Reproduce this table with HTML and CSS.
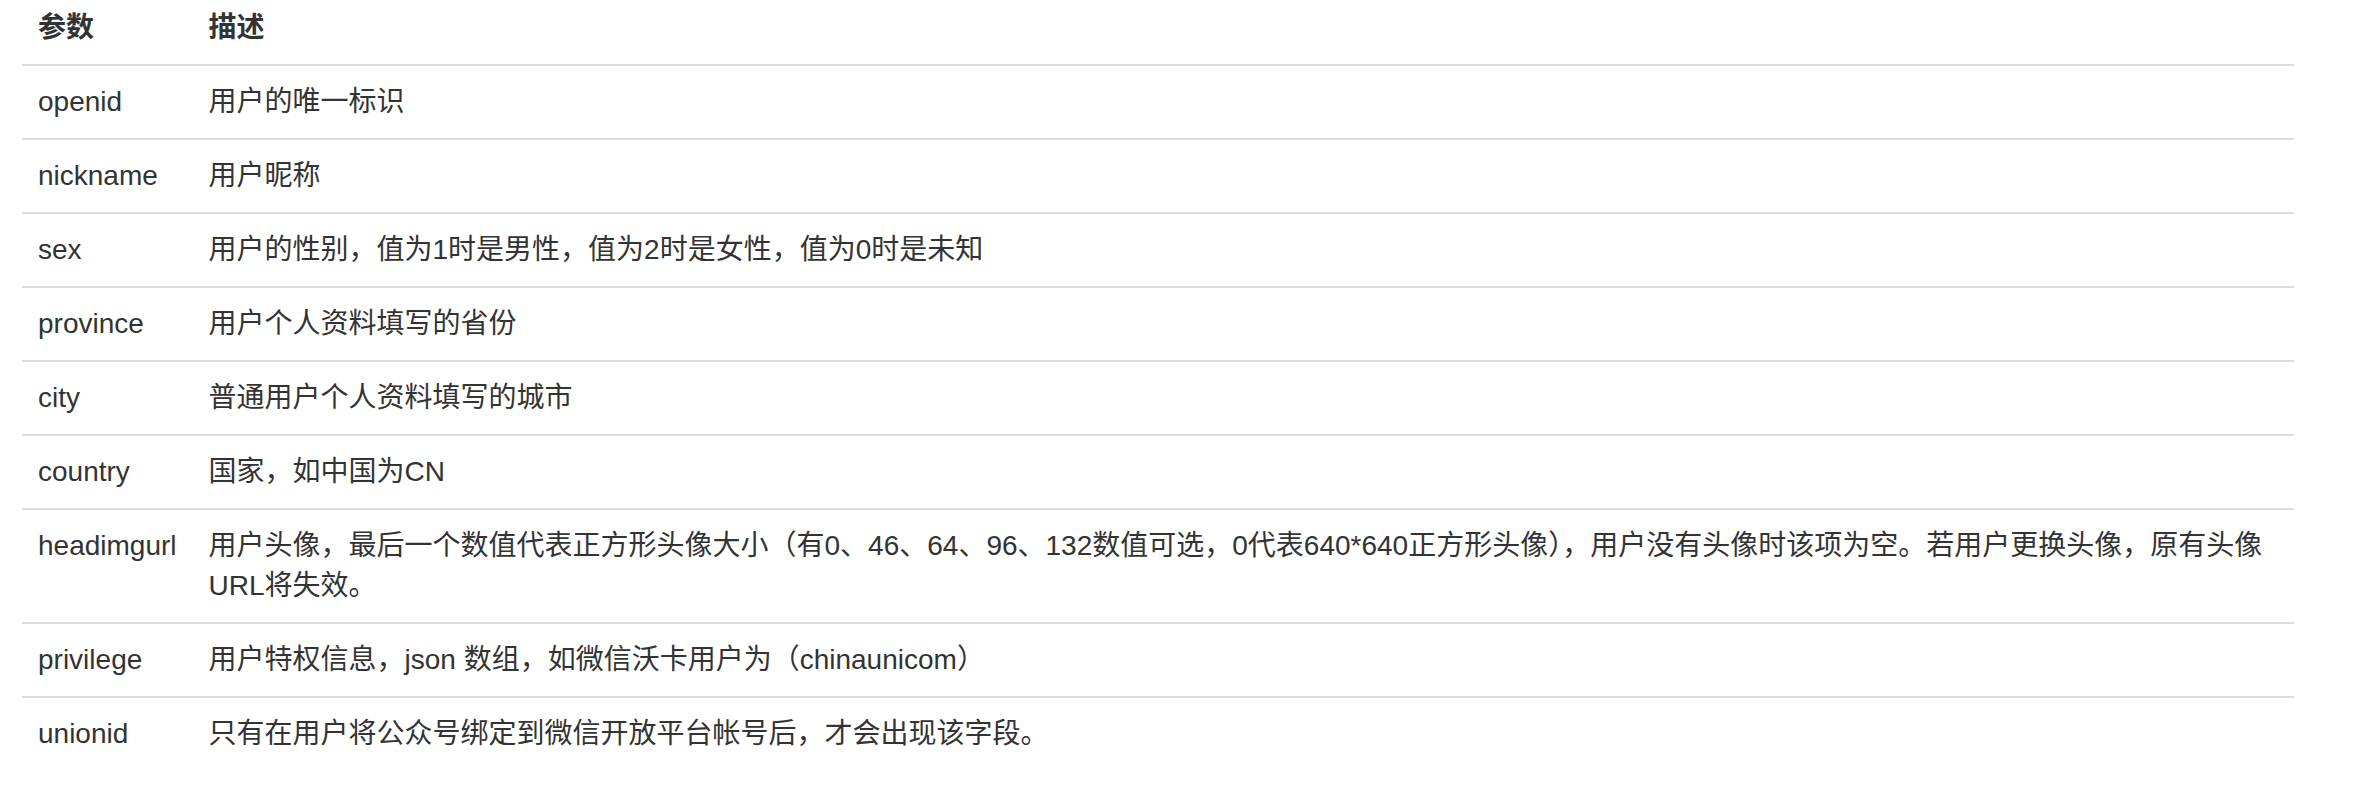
FILE: index.html
```html
<!DOCTYPE html>
<html lang="zh-CN">
<head>
    <meta charset="UTF-8">
    <title>参数说明</title>
    <link rel="stylesheet" href="styles.css">
</head>
<body>
<div class="wrap">
    <table class="params">
        <thead>
        <tr>
            <th>参数</th>
            <th>描述</th>
        </tr>
        </thead>
        <tbody>
        <tr><td>openid</td><td>用户的唯一标识</td></tr>
        <tr><td>nickname</td><td>用户昵称</td></tr>
        <tr><td>sex</td><td>用户的性别，值为1时是男性，值为2时是女性，值为0时是未知</td></tr>
        <tr><td>province</td><td>用户个人资料填写的省份</td></tr>
        <tr><td>city</td><td>普通用户个人资料填写的城市</td></tr>
        <tr><td>country</td><td>国家，如中国为CN</td></tr>
        <tr><td>headimgurl</td><td>用户头像，最后一个数值代表正方形头像大小（有0、46、64、96、132数值可选，0代表640*640正方形头像），用户没有头像时该项为空。若用户更换头像，原有头像URL将失效。</td></tr>
        <tr><td>privilege</td><td>用户特权信息，json 数组，如微信沃卡用户为（chinaunicom）</td></tr>
        <tr><td>unionid</td><td>只有在用户将公众号绑定到微信开放平台帐号后，才会出现该字段。</td></tr>
        </tbody>
    </table>
</div>
</body>
</html>
```
FILE: styles.css
```css
*{
    margin: 0;
    padding: 0;
}
body{
    background: #fff;
    color: #333;
    font-family: "Liberation Sans", "Noto Sans CJK SC", sans-serif;
    font-size: 28px;
    line-height: 40px;
}
.wrap{
    width: 2272px;
    padding-left: 22px;
    margin-top: -8px;
}
.params{
    width: 100%;
    border-collapse: collapse;
    border-spacing: 0;
}
.params th,
.params td{
    padding: 16px;
    text-align: left;
    vertical-align: top;
}
.params th{
    font-weight: bold;
    border-bottom: 2px solid #ddd;
}
.params td{
    border-top: 2px solid #ddd;
}
.params thead + tbody tr:first-child td{
    border-top: 0;
}
.params td:first-child{
    white-space: nowrap;
}
```
